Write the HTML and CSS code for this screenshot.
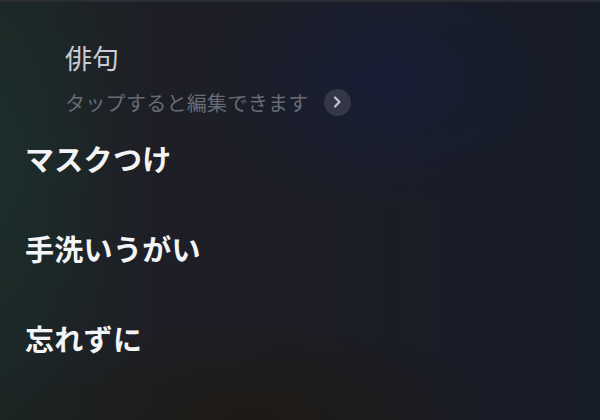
FILE: index.html
```html
<html lang="ja">

<head>
  <meta charset="UTF-8">
  <meta name="viewport" content="width=device-width, initial-scale=1.0">
  <title>俳句</title>
  <link rel="stylesheet" href="styles.css">
</head>

<body>
  <div id="screen">
    <div class="header">
      <div class="title">俳句</div>
      <div class="hint">
        <span>タップすると編集できます</span>
        <span class="chevron">
          <svg width="12" height="14" viewBox="0 0 12 14">
            <path d="M4 2.5 L8.5 7 L4 11.5" fill="none" stroke="#c3c6cf" stroke-width="2.2" stroke-linecap="round" stroke-linejoin="round" />
          </svg>
        </span>
      </div>
    </div>
    <div class="lines">
      <div class="line">マスクつけ</div>
      <div class="line">手洗いうがい</div>
      <div class="line">忘れずに</div>
    </div>
  </div>
</body>

</html>
```

FILE: styles.css
```css
html,
body {
  margin: 0;
  height: 100%;
}

body {
  font-family: "Noto Sans CJK JP", "Noto Sans", sans-serif;
  background-color: #1c1e24;
  background-image:
    radial-gradient(ellipse 170px 130px at 380px 80px, rgba(16, 30, 70, 0.45), transparent),
    radial-gradient(ellipse 130px 260px at 0px 160px, rgba(30, 64, 56, 0.35), transparent),
    radial-gradient(ellipse 260px 100px at 250px 420px, rgba(30, 24, 10, 0.6), transparent),
    linear-gradient(90deg, #1b2524 0%, #1e1f26 25%, #1c1d25 55%, #171c29 100%);
  overflow: hidden;
}

#screen {
  padding: 40px 25px 0;
  border-top: 2px solid #2a2d33;
  box-sizing: border-box;
  height: 100%;
}

.header {
  margin-left: 40px;
  margin-top: -2px;
}

.title {
  font-size: 27px;
  line-height: 36px;
  color: #c9ccd3;
}

.hint {
  display: flex;
  align-items: center;
  margin-top: 12px;
  height: 28px;
  font-size: 20px;
  letter-spacing: 0.3px;
  color: #686c76;
}

.chevron {
  display: flex;
  align-items: center;
  justify-content: center;
  width: 27px;
  height: 27px;
  margin-left: 15px;
  border-radius: 50%;
  background-color: #343846;
}

.lines {
  display: flex;
  flex-direction: column;
  gap: 50px;
  margin-top: 22px;
}

.line {
  font-size: 29px;
  line-height: 40px;
  font-weight: bold;
  letter-spacing: 0.3px;
  color: #f3f4f6;
}
```
